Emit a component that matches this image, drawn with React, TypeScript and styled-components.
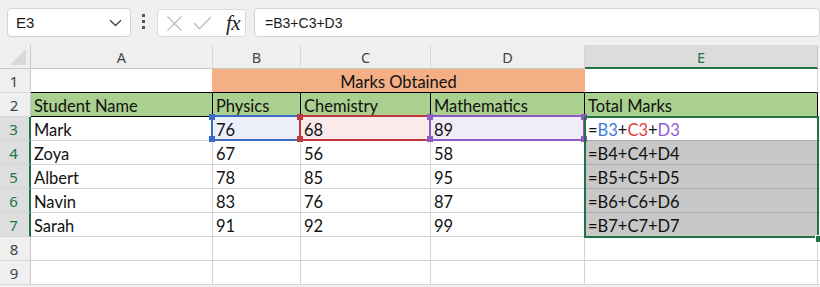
import React from 'react';
import styled, { createGlobalStyle } from 'styled-components';

const GREEN = '#217346';
const GRID = '#d4d4d4';
const BLACK = '#000';
const ORANGE = '#f4b084';
const LEAF = '#a9d08e';

const GlobalStyle = createGlobalStyle`
  *, *::before, *::after { box-sizing: border-box; }
  html, body { margin: 0; padding: 0; background: #fff; }
  body { font-family: 'Lato', 'Liberation Sans', sans-serif; }
`;

const Window = styled.div`
  width: 820px;
  height: 287px;
  overflow: hidden;
  background: #f0f0f0;
`;

// formula bar row
const Toolbar = styled.div`
  display: flex;
  align-items: flex-start;
  height: 45px;
  padding: 8px 0 0 7px;
  font-family: 'Liberation Sans', Arial, sans-serif;
  color: #1a1a1a;
`;

const NameBox = styled.div`
  display: flex;
  align-items: center;
  justify-content: space-between;
  width: 126px;
  height: 29px;
  padding: 0 8px 0 8px;
  background: #fff;
  border: 1px solid #d2d2d2;
  border-radius: 4px;
  font-size: 15px;
`;

const Dots = styled.div`
  display: flex;
  flex-direction: column;
  gap: 3px;
  margin: 6px 0 0 11px;
  span {
    width: 3px;
    height: 3px;
    background: #555;
  }
`;

const ButtonGroup = styled.div`
  display: flex;
  align-items: center;
  width: 90px;
  height: 28px;
  margin: 1px 0 0 12px;
  padding: 0 5px 0 8px;
  background: #fff;
  border: 1px solid #d8d8d8;
  border-radius: 4px;
  gap: 10px;
`;

const Fx = styled.span`
  margin-left: auto;
  font-family: 'Liberation Serif', 'Times New Roman', serif;
  font-style: italic;
  font-size: 21px;
  line-height: 1;
  color: #222;
  letter-spacing: -0.5px;
`;

const FormulaInput = styled.div`
  display: flex;
  align-items: center;
  width: 575px;
  height: 29px;
  margin-left: 8px;
  padding-left: 10px;
  background: #fff;
  border: 1px solid #d2d2d2;
  border-radius: 4px;
  font-size: 14px;
`;

// worksheet
const Sheet = styled.div`
  position: relative;
  display: grid;
  grid-template-columns: 31px 182px 88px 130px 154px 233px 1fr;
  grid-auto-rows: 24px;
  background: #fff;
  font-size: 16.5px;
  color: #111;
`;

const Corner = styled.div`
  display: flex;
  align-items: flex-end;
  justify-content: flex-end;
  padding: 0 4px 3px 0;
  background: #efefef;
  border-right: 1px solid #c8c8c8;
  border-bottom: 1px solid #c8c8c8;
`;

const ColHead = styled.div<{ $active?: boolean }>`
  display: flex;
  align-items: center;
  justify-content: center;
  font-family: 'Noto Sans', 'Liberation Sans', sans-serif;
  font-size: 14.5px;
  padding-top: 1px;
  color: ${p => (p.$active ? GREEN : '#444')};
  background: ${p => (p.$active ? '#dcdcdc' : '#efefef')};
  border-right: 1px solid ${p => (p.$active ? '#c8c8c8' : '#d6d6d6')};
  border-bottom: ${p => (p.$active ? `2px solid ${GREEN}` : '1px solid #c8c8c8')};
`;

const RowHead = styled.div<{ $active?: boolean }>`
  display: flex;
  align-items: center;
  justify-content: center;
  padding-right: 2px;
  font-family: 'Noto Sans', 'Liberation Sans', sans-serif;
  font-size: 15px;
  color: ${p => (p.$active ? GREEN : '#444')};
  background: ${p => (p.$active ? '#dedede' : '#efefef')};
  border-right: ${p => (p.$active ? `2px solid ${GREEN}` : '1px solid #c8c8c8')};
  border-bottom: 1px solid #d6d6d6;
`;

const Cell = styled.div<{ $fill?: string; $right?: string; $bottom?: string; $span?: number; $center?: boolean }>`
  grid-column: span ${p => p.$span ?? 1};
  display: flex;
  align-items: flex-end;
  justify-content: ${p => (p.$center ? 'center' : 'flex-start')};
  padding: 0 3px;
  line-height: 20px;
  white-space: nowrap;
  overflow: hidden;
  background: ${p => p.$fill ?? '#fff'};
  border-right: 1px solid ${p => p.$right ?? GRID};
  border-bottom: 1px solid ${p => p.$bottom ?? GRID};
`;

const Tok = styled.span<{ $c: string }>`
  color: ${p => p.$c};
`;

// coloured reference outlines drawn over the cells
const RefBox = styled.div<{ $color: string; $col: number; $row: number }>`
  position: absolute;
  grid-column: ${p => p.$col} / ${p => p.$col + 1};
  grid-row: ${p => p.$row} / ${p => p.$row + 1};
  top: -2px;
  left: -2px;
  right: 0;
  bottom: 0;
  box-shadow: inset 0 0 0 2px ${p => p.$color};
  pointer-events: none;
  z-index: 2;
`;

const Handle = styled.span<{ $color: string; $v: 'top' | 'bottom'; $h: 'left' | 'right' }>`
  position: absolute;
  width: 6px;
  height: 6px;
  background: ${p => p.$color};
  ${p => p.$v}: -1px;
  ${p => p.$h}: -2px;
`;

const Selection = styled.div<{ $col: number; $row: number; $rowEnd: number }>`
  position: absolute;
  grid-column: ${p => p.$col} / ${p => p.$col + 1};
  grid-row: ${p => p.$row} / ${p => p.$rowEnd};
  top: -1px;
  left: -1px;
  right: -1px;
  bottom: -1px;
  box-shadow: inset 0 0 0 2px ${GREEN};
  pointer-events: none;
  z-index: 3;
`;

const FillHandle = styled.span`
  position: absolute;
  right: -3px;
  bottom: -4px;
  width: 6px;
  height: 6px;
  background: ${GREEN};
  box-shadow: 0 0 0 1px #fff;
`;

const refs = [
  { col: 3, color: '#3a6cc5', fill: '#ebeff9' },
  { col: 4, color: '#c0393f', fill: '#fbeaea' },
  { col: 5, color: '#8c5bc6', fill: '#f1edf8' },
];

const students = [
  { name: 'Mark', p: 76, c: 68, m: 89 },
  { name: 'Zoya', p: 67, c: 56, m: 58 },
  { name: 'Albert', p: 78, c: 85, m: 95 },
  { name: 'Navin', p: 83, c: 76, m: 87 },
  { name: 'Sarah', p: 91, c: 92, m: 99 },
];

const Chevron = () => (
  <svg width="13" height="8" viewBox="0 0 13 8">
    <path d="M1 1.2 L6.5 6.5 L12 1.2" fill="none" stroke="#444" strokeWidth="1.3" />
  </svg>
);

const Cross = () => (
  <svg width="17" height="17" viewBox="0 0 17 17">
    <path d="M1.5 1.5 L15.5 15.5 M15.5 1.5 L1.5 15.5" stroke="#bcbcbc" strokeWidth="1.3" />
  </svg>
);

const Check = () => (
  <svg width="19" height="14" viewBox="0 0 19 14">
    <path d="M1 7 L6.5 12.8 L18 1" fill="none" stroke="#bcbcbc" strokeWidth="1.3" />
  </svg>
);

const CornerMark = () => (
  <svg width="16" height="16" viewBox="0 0 16 16">
    <polygon points="16,0 16,16 0,16" fill="#d8d8d8" />
  </svg>
);

const App = () => (
  <Window>
    <GlobalStyle />
    <Toolbar>
      <NameBox>
        <span>E3</span>
        <Chevron />
      </NameBox>
      <Dots>
        <span />
        <span />
        <span />
      </Dots>
      <ButtonGroup>
        <Cross />
        <Check />
        <Fx>fx</Fx>
      </ButtonGroup>
      <FormulaInput>=B3+C3+D3</FormulaInput>
    </Toolbar>

    <Sheet>
      <Corner>
        <CornerMark />
      </Corner>
      {['A', 'B', 'C', 'D', 'E', ''].map(l => (
        <ColHead key={l || 'F'} $active={l === 'E'}>{l}</ColHead>
      ))}

      <RowHead>1</RowHead>
      <Cell $right={ORANGE} $bottom={BLACK} />
      <Cell $span={3} $fill={ORANGE} $right={ORANGE} $bottom={BLACK} $center>Marks Obtained</Cell>
      <Cell $bottom={BLACK} />
      <Cell />

      <RowHead>2</RowHead>
      {['Student Name', 'Physics', 'Chemistry', 'Mathematics', 'Total Marks'].map(h => (
        <Cell key={h} $fill={LEAF} $right={BLACK} $bottom={BLACK}>{h}</Cell>
      ))}
      <Cell />

      {students.map((s, i) => {
        const r = i + 3;
        const first = i === 0;
        return (
          <React.Fragment key={s.name}>
            <RowHead $active>{r}</RowHead>
            <Cell>{s.name}</Cell>
            <Cell $fill={first ? refs[0].fill : undefined}>{s.p}</Cell>
            <Cell $fill={first ? refs[1].fill : undefined}>{s.c}</Cell>
            <Cell $fill={first ? refs[2].fill : undefined}>{s.m}</Cell>
            {first ? (
              <Cell $bottom="#ababab">
                =<Tok $c="#3b7ad9">B3</Tok>+<Tok $c="#e03a3e">C3</Tok>+<Tok $c="#8f5ccf">D3</Tok>
              </Cell>
            ) : (
              <Cell $fill="#c8c8c8" $bottom="#ababab">{`=B${r}+C${r}+D${r}`}</Cell>
            )}
            <Cell />
          </React.Fragment>
        );
      })}

      {[8, 9].map(r => (
        <React.Fragment key={r}>
          <RowHead>{r}</RowHead>
          <Cell />
          <Cell />
          <Cell />
          <Cell />
          <Cell />
          <Cell />
        </React.Fragment>
      ))}

      {refs.map(ref => (
        <RefBox key={ref.col} $color={ref.color} $col={ref.col} $row={4}>
          <Handle $color={ref.color} $v="top" $h="left" />
          <Handle $color={ref.color} $v="top" $h="right" />
          <Handle $color={ref.color} $v="bottom" $h="left" />
          <Handle $color={ref.color} $v="bottom" $h="right" />
        </RefBox>
      ))}
      <Selection $col={6} $row={4} $rowEnd={9}>
        <FillHandle />
      </Selection>
    </Sheet>
  </Window>
);

export default App;
